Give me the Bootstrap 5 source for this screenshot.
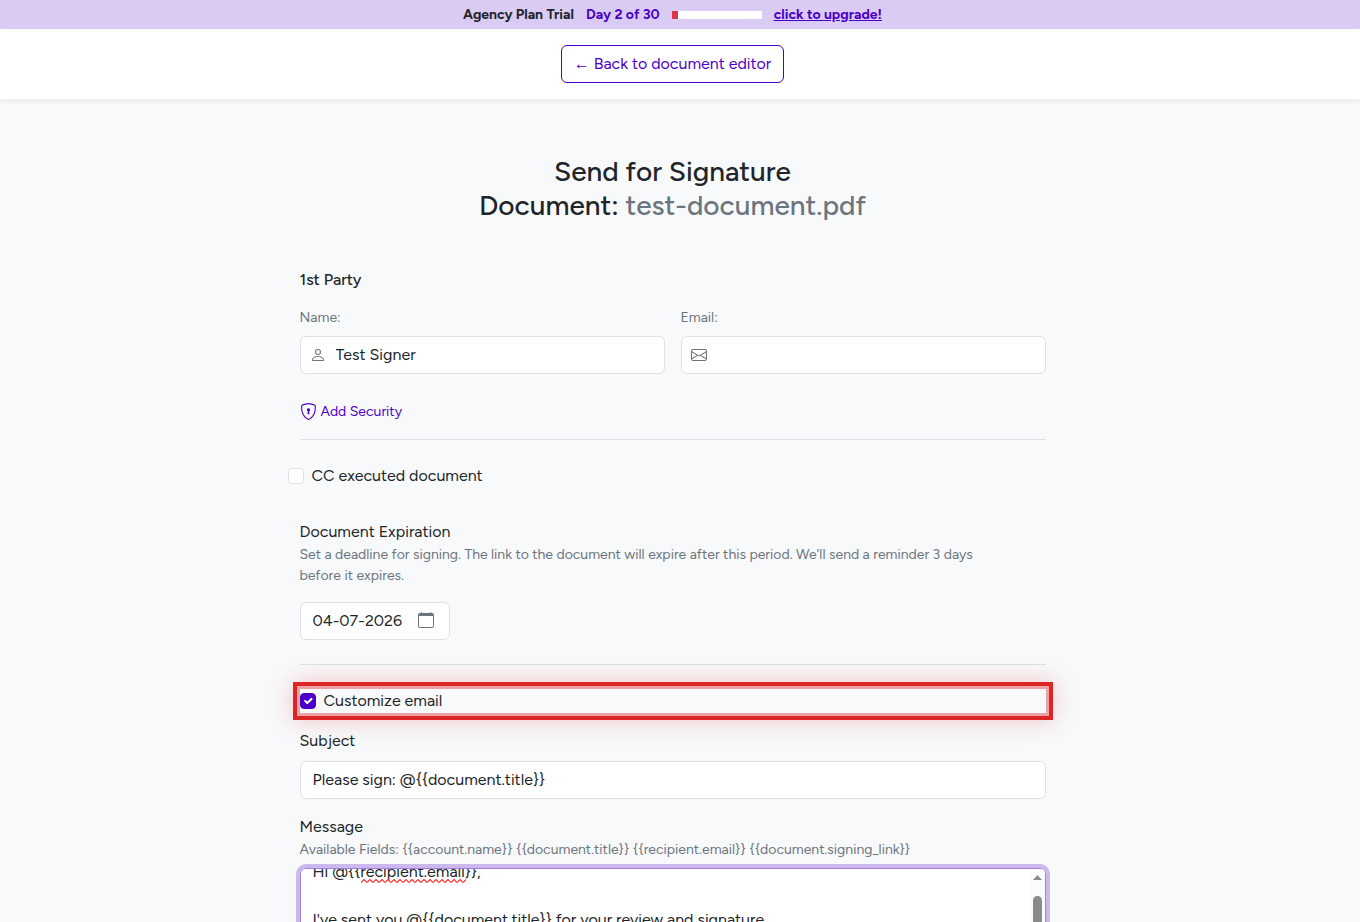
<!doctype html>
<html lang="en">
<head>
<meta charset="utf-8">
<meta name="viewport" content="width=device-width, initial-scale=1">
<title>Send for Signature</title>
<link href="https://cdn.jsdelivr.net/npm/bootstrap@5.3.0/dist/css/bootstrap.min.css" rel="stylesheet">
<style>
  :root { --brand: #4b00c8; --brand-soft: #dacbf4; --muted: #6c757d; }
  body {
    font-family: Figtree, "Open Sans", Inter, sans-serif;
    background: #f8f9fb;
    color: #212529;
  }
  .page-gutter { padding-right: 15px; }
  .trial-bar { background: var(--brand-soft); font-size: 14px; line-height: 21px; }
  .trial-bar a, .trial-day { color: var(--brand); }
  .trial-meter { width: 90px; height: 8px; border-radius: 0; background: #fff; }
  .btn-brand {
    --bs-btn-color: var(--brand);
    --bs-btn-border-color: var(--brand);
    --bs-btn-hover-bg: var(--brand);
    --bs-btn-hover-color: #fff;
  }
  .back-arrow { font-family: "Liberation Sans", sans-serif; line-height: 1; }
  .form-column { max-width: 770px; }
  .inset { padding-left: 12px; padding-right: 12px; }
  .page-title { font-size: 28px; line-height: 34px; font-weight: 500; margin: 55px 0 46px; }
  .party-title { font-size: 16px; line-height: 24px; font-weight: 500; margin-bottom: 15px; }
  .soft { color: var(--muted); }
  .fine { font-size: 14px; line-height: 21px; }
  .expiry-note { max-width: 712px; }
  .rule { border-top: 1px solid #dee2e6; }
  .field-icon { left: 10px; top: 11px; color: var(--muted); pointer-events: none; }
  .form-control { color: #212529; background-color: #fff; border-color: #dee2e6; border-radius: 6px; height: 38px; padding: 5px 12px 7px; }
  .with-icon { padding-left: 35px; }
  .date-box { width: 150px; }
  .date-icon { right: 16px; top: 10px; color: var(--muted); pointer-events: none; }
  .security-link { color: var(--brand); margin: 27px 0 17px; }
  .tick { width: 16px; height: 16px; margin: 0; flex: none; border-color: #dee2e6; background-color: #fff; }
  .tick:checked { background-color: var(--brand); border-color: var(--brand); }
  .highlighted {
    outline: 4px solid #dc2626;
    outline-offset: 3px;
    box-shadow: 0 0 0 3px #eea2a3, 0 0 24px 7px rgba(220, 38, 38, .25);
  }
  .message-box, .message-box:focus {
    height: 220px;
    resize: none;
    overflow-y: scroll;
    scrollbar-width: none;
    border-color: #a37fe3;
    box-shadow: 0 0 0 4px #cbb9ee;
  }
  .scroll-rail { right: 1px; top: 1px; bottom: 1px; width: 15px; background: #fcfcfc; border-radius: 0 5px 5px 0; padding: 6px 3px 24px; pointer-events: none; }
  .scroll-thumb { width: 9px; height: 110px; margin-top: 16px; border-radius: 5px; background: #8b8b8b; }
  .spell-mark { left: 61px; top: 11px; pointer-events: none; }
</style>
</head>
<body>

<div class="trial-bar page-gutter">
  <div class="d-flex justify-content-center align-items-center py-1 fw-bold">
    <span class="me-2 pe-1">Agency Plan Trial</span>
    <span class="trial-day me-2 pe-1">Day 2 of 30</span>
    <div class="progress trial-meter me-2" role="progressbar" aria-label="Trial days used" aria-valuenow="2" aria-valuemin="0" aria-valuemax="30">
      <div class="progress-bar bg-danger" style="width: 6.67%"></div>
    </div>
    <a href="#" class="ms-1">click to upgrade!</a>
  </div>
</div>

<header class="bg-white shadow-sm page-gutter">
  <div class="d-flex justify-content-center py-3">
    <button type="button" class="btn btn-brand"><span class="back-arrow">←</span> Back to document editor</button>
  </div>
</header>

<main class="page-gutter">
  <form class="form-column mx-auto">
    <div class="inset">
      <h1 class="page-title text-center">Send for Signature<br>Document: <span class="soft">test-document.pdf</span></h1>

      <h2 class="party-title">1st Party</h2>
      <div class="row gx-3">
        <div class="col-6">
          <label for="signer-name" class="fine soft d-block mb-2">Name:</label>
          <div class="position-relative">
            <svg class="field-icon position-absolute" width="16" height="16" viewBox="0 0 16 16" fill="currentColor" aria-hidden="true"><path d="M8 8a3 3 0 1 0 0-6 3 3 0 0 0 0 6Zm2-3a2 2 0 1 1-4 0 2 2 0 0 1 4 0Zm4 8c0 1-1 1-1 1H3s-1 0-1-1 1-4 6-4 6 3 6 4Zm-1-.004c-.001-.246-.154-.986-.832-1.664C11.516 10.68 10.289 10 8 10c-2.29 0-3.516.68-4.168 1.332-.678.678-.83 1.418-.832 1.664h10Z"/></svg>
            <input id="signer-name" type="text" class="form-control with-icon" value="Test Signer">
          </div>
        </div>
        <div class="col-6">
          <label for="signer-email" class="fine soft d-block mb-2">Email:</label>
          <div class="position-relative">
            <svg class="field-icon position-absolute" width="16" height="16" viewBox="0 0 16 16" fill="currentColor" aria-hidden="true"><path d="M0 4a2 2 0 0 1 2-2h12a2 2 0 0 1 2 2v8a2 2 0 0 1-2 2H2a2 2 0 0 1-2-2V4Zm2-1a1 1 0 0 0-1 1v.217l7 4.2 7-4.2V4a1 1 0 0 0-1-1H2Zm13 2.383-4.708 2.825L15 11.105V5.383Zm-.034 6.876-5.64-3.471L8 9.583l-1.326-.795-5.64 3.47A1 1 0 0 0 2 13h12a1 1 0 0 0 .966-.741ZM1 11.105l4.708-2.897L1 5.383v5.722Z"/></svg>
            <input id="signer-email" type="email" class="form-control with-icon">
          </div>
        </div>
      </div>

      <a href="#" class="security-link fine d-inline-flex align-items-center text-decoration-none">
        <svg class="me-1" width="17" height="17" viewBox="0 0 16 16" fill="currentColor" aria-hidden="true"><path d="M5.338 1.59a61.44 61.44 0 0 0-2.837.856.481.481 0 0 0-.328.39c-.554 4.157.726 7.19 2.253 9.188a10.725 10.725 0 0 0 2.287 2.233c.346.244.652.42.893.533.12.057.218.095.293.118a.55.55 0 0 0 .101.025.615.615 0 0 0 .1-.025c.076-.023.174-.061.294-.118.24-.113.547-.29.893-.533a10.726 10.726 0 0 0 2.287-2.233c1.527-1.997 2.807-5.031 2.253-9.188a.48.48 0 0 0-.328-.39c-.651-.213-1.75-.56-2.837-.855C9.552 1.29 8.531 1.067 8 1.067c-.53 0-1.552.223-2.662.524zM5.072.56C6.157.265 7.31 0 8 0s1.843.265 2.928.56c1.11.3 2.229.655 2.887.87a1.54 1.54 0 0 1 1.044 1.262c.596 4.477-.787 7.795-2.465 9.99a11.775 11.775 0 0 1-2.517 2.453 7.159 7.159 0 0 1-1.048.625c-.28.132-.581.24-.829.24s-.548-.108-.829-.24a7.158 7.158 0 0 1-1.048-.625 11.777 11.777 0 0 1-2.517-2.453C1.928 10.487.545 7.169 1.141 2.692A1.54 1.54 0 0 1 2.185 1.43 62.456 62.456 0 0 1 5.072.56z"/><path d="M9.5 6.5a1.5 1.5 0 0 1-1 1.415l.385 1.99a.5.5 0 0 1-.491.595h-.788a.5.5 0 0 1-.49-.595l.384-1.99a1.5 1.5 0 1 1 2-1.415z"/></svg>Add Security</a>

      <div class="rule mb-4"></div>
    </div>

    <div class="d-flex align-items-center mb-4">
      <input id="cc" type="checkbox" class="form-check-input tick">
      <label for="cc" class="ms-2">CC executed document</label>
    </div>

    <div class="inset">
      <label for="expires" class="d-block pt-2">Document Expiration</label>
      <p class="fine soft expiry-note mb-3">Set a deadline for signing. The link to the document will expire after this period. We'll send a reminder 3 days before it expires.</p>
      <div class="position-relative date-box">
        <input id="expires" type="text" class="form-control" value="04-07-2026">
        <svg class="date-icon position-absolute" width="16" height="16" viewBox="0 0 16 16" fill="currentColor" aria-hidden="true"><path d="M3.5 0a.5.5 0 0 1 .5.5V1h8V.5a.5.5 0 0 1 1 0V1h1a2 2 0 0 1 2 2v11a2 2 0 0 1-2 2H2a2 2 0 0 1-2-2V3a2 2 0 0 1 2-2h1V.5a.5.5 0 0 1 .5-.5zM1 4v10a1 1 0 0 0 1 1h12a1 1 0 0 0 1-1V4H1z"/></svg>
      </div>
      <div class="rule my-4"></div>

      <div class="highlighted d-flex align-items-center mb-3">
        <input id="customize" type="checkbox" class="form-check-input tick" checked>
        <label for="customize" class="ms-2">Customize email</label>
      </div>

      <label for="subject" class="d-block mb-2">Subject</label>
      <input id="subject" type="text" class="form-control mb-3" value="Please sign: @{{document.title}}">

      <label for="message" class="d-block">Message</label>
      <p class="fine soft mb-2" id="message-help">Available Fields: {{account.name}} {{document.title}} {{recipient.email}} {{document.signing_link}}</p>
      <div class="position-relative">
        <textarea id="message" class="form-control message-box" aria-describedby="message-help" spellcheck="false">Hi @{{recipient.email}},

I've sent you @{{document.title}} for your review and signature.

Please click the link below to review and sign:

{{document.signing_link}}

Thank you,

{{account.name}}</textarea>
        <svg class="spell-mark position-absolute" width="105" height="4" aria-hidden="true">
          <defs><pattern id="wave" width="6" height="4" patternUnits="userSpaceOnUse"><path d="M0 3.5 3 .5 6 3.5" fill="none" stroke="#f33" stroke-width="1.2"/></pattern></defs>
          <rect width="105" height="4" fill="url(#wave)"/>
        </svg>
        <div class="scroll-rail position-absolute" aria-hidden="true">
          <svg class="d-block" width="9" height="5" viewBox="0 0 9 5"><path d="M0 5 4.5 0 9 5z" fill="#8b8b8b"/></svg>
          <div class="scroll-thumb"></div>
        </div>
      </div>
    </div>
  </form>
</main>

<script src="https://cdn.jsdelivr.net/npm/bootstrap@5.3.0/dist/js/bootstrap.bundle.min.js"></script>
<script>
  // Open the message slightly scrolled, as after typing in it.
  document.getElementById('message').scrollTop = 14;
</script>
</body>
</html>
